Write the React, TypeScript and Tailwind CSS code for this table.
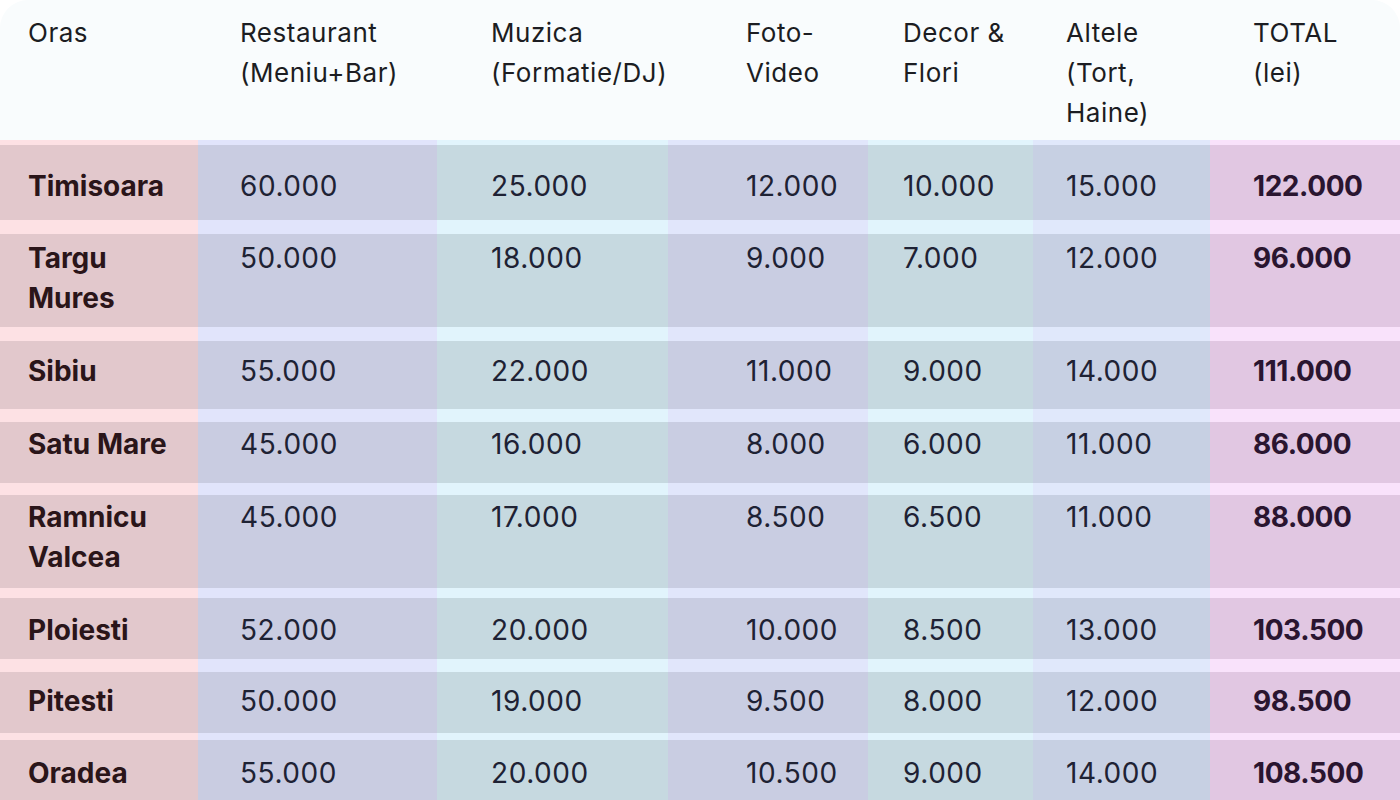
import React from "react";

type Row = {
  city: string[];
  values: string[];
  total: string;
  cell: string; // height + top padding of the colored part
  sep: string; // bottom separator thickness
};

const rows: Row[] = [
  { city: ["Timisoara"], values: ["60.000", "25.000", "12.000", "10.000", "15.000"], total: "122.000", cell: "h-[89px] pt-[21px]", sep: "border-b-[14px]" },
  { city: ["Targu", "Mures"], values: ["50.000", "18.000", "9.000", "7.000", "12.000"], total: "96.000", cell: "h-[107px] pt-[4px]", sep: "border-b-[14px]" },
  { city: ["Sibiu"], values: ["55.000", "22.000", "11.000", "9.000", "14.000"], total: "111.000", cell: "h-[81px] pt-[10px]", sep: "border-b-[13px]" },
  { city: ["Satu Mare"], values: ["45.000", "16.000", "8.000", "6.000", "11.000"], total: "86.000", cell: "h-[73px] pt-[2px]", sep: "border-b-[12px]" },
  { city: ["Ramnicu", "Valcea"], values: ["45.000", "17.000", "8.500", "6.500", "11.000"], total: "88.000", cell: "h-[103px] pt-[2px]", sep: "border-b-[10px]" },
  { city: ["Ploiesti"], values: ["52.000", "20.000", "10.000", "8.500", "13.000"], total: "103.500", cell: "h-[74px] pt-[12px]", sep: "border-b-[13px]" },
  { city: ["Pitesti"], values: ["50.000", "19.000", "9.500", "8.000", "12.000"], total: "98.500", cell: "h-[68px] pt-[9px]", sep: "border-b-[7px]" },
  { city: ["Oradea"], values: ["55.000", "20.000", "10.500", "9.000", "14.000"], total: "108.500", cell: "h-[80px] pt-[13px]", sep: "border-b-[0px]" },
];

// per column: background, separator colour, left padding
const cols = [
  { bg: "bg-[#e2c8cc]", line: "border-[#fde1e4]", pl: "pl-[28px]" },
  { bg: "bg-[#c9cce1]", line: "border-[#e1e4fb]", pl: "pl-[42px]" },
  { bg: "bg-[#c6d9e0]", line: "border-[#e1f4fc]", pl: "pl-[54px]" },
  { bg: "bg-[#c9cde2]", line: "border-[#e1e6fb]", pl: "pl-[78px]" },
  { bg: "bg-[#c6d9e0]", line: "border-[#e1f4fc]", pl: "pl-[35px]" },
  { bg: "bg-[#c7d0e3]", line: "border-[#e0e8fb]", pl: "pl-[33px]" },
  { bg: "bg-[#e1c7e2]", line: "border-[#f9e2fb]", pl: "pl-[43px]" },
];

const headers: string[][] = [
  ["Oras"],
  ["Restaurant", "(Meniu+Bar)"],
  ["Muzica", "(Formatie/DJ)"],
  ["Foto-", "Video"],
  ["Decor &", "Flori"],
  ["Altele", "(Tort,", "Haine)"],
  ["TOTAL", "(lei)"],
];

const grid = "grid grid-cols-[198px_239px_231px_200px_165px_177px_190px]";

export default function App() {
  return (
    <div
      className="w-[1400px] h-[800px] overflow-hidden bg-white"
      style={{ fontFamily: "Inter, 'Noto Sans', sans-serif" }}
    >
      <div className={`${grid} h-[140px] bg-[#f9fcfd] rounded-t-[28px]`}>
        {headers.map((h, i) => (
          <div
            key={i}
            className={`${cols[i].pl} pt-[13px] text-[26px] leading-[40px] tracking-[0.02em] text-[#1c1d22] whitespace-nowrap`}
          >
            {h.map((l, j) => (
              <div key={j}>{l}</div>
            ))}
          </div>
        ))}
      </div>

      <div className={grid}>
        {cols.map((c, i) => (
          <div key={i} className={`h-[5px] border-b-[5px] ${c.line}`} />
        ))}
      </div>

      {rows.map((r, ri) => (
        <div key={ri} className={grid}>
          <div
            className={`${cols[0].bg} ${cols[0].line} ${cols[0].pl} ${r.cell} ${r.sep} text-[28px] leading-[40px] font-bold text-[#2a1519] whitespace-nowrap`}
          >
            {r.city.map((l, j) => (
              <div key={j}>{l}</div>
            ))}
          </div>
          {r.values.map((v, vi) => (
            <div
              key={vi}
              className={`${cols[vi + 1].bg} ${cols[vi + 1].line} ${cols[vi + 1].pl} ${r.cell} ${r.sep} text-[28px] leading-[40px] tracking-[0.02em] text-[#1e2234]`}
            >
              {v}
            </div>
          ))}
          <div
            className={`${cols[6].bg} ${cols[6].line} ${cols[6].pl} ${r.cell} ${r.sep} text-[28px] leading-[40px] font-bold tracking-[-0.015em] text-[#2a1530]`}
          >
            {r.total}
          </div>
        </div>
      ))}
    </div>
  );
}
